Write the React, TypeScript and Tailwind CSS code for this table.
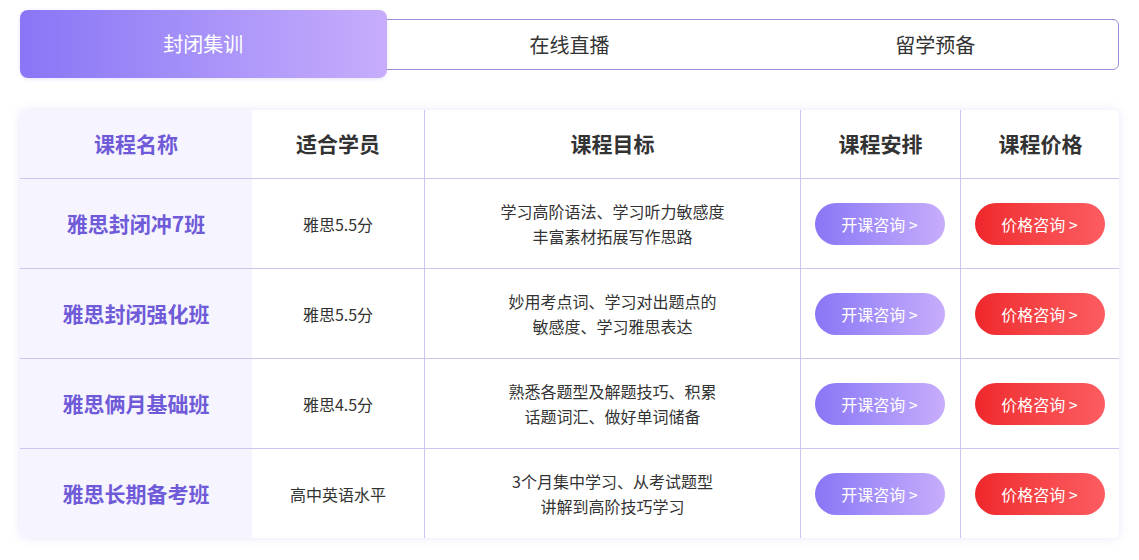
const rows = [
  { name: '雅思封闭冲7班', level: '雅思5.5分', goal: ['学习高阶语法、学习听力敏感度', '丰富素材拓展写作思路'] },
  { name: '雅思封闭强化班', level: '雅思5.5分', goal: ['妙用考点词、学习对出题点的', '敏感度、学习雅思表达'] },
  { name: '雅思俩月基础班', level: '雅思4.5分', goal: ['熟悉各题型及解题技巧、积累', '话题词汇、做好单词储备'] },
  { name: '雅思长期备考班', level: '高中英语水平', goal: ['3个月集中学习、从考试题型', '讲解到高阶技巧学习'] },
];

const font = 'font-["Microsoft_YaHei","Noto_Sans_CJK_SC",sans-serif]';

export default function App() {
  return (
    <div className={`min-h-[560px] bg-white px-[20px] pt-[19px] text-[#333] ${font}`}>
      <div className="grid h-[51px] grid-cols-3 rounded-md border border-[#a08cd4]">
        <div className="-mb-[9px] -ml-px -mt-[10px] flex items-center justify-center rounded-lg bg-gradient-to-r from-[#8a75f6] to-[#c7adfb] text-[20px] text-white shadow-[0_1px_4px_rgba(140,110,240,0.2)]">
          封闭集训
        </div>
        <div className="flex items-center justify-center text-[20px]">在线直播</div>
        <div className="flex items-center justify-center text-[20px]">留学预备</div>
      </div>

      <div className="mt-[40px] overflow-hidden rounded-md bg-white shadow-[0_0_10px_rgba(130,110,230,0.18)]">
        <div className="grid h-[68px] grid-cols-[232px_172px_376px_160px_160px] text-[21px] font-bold">
          <div className="flex items-center justify-center bg-[#f6f4fe] text-[#6f5ad8]">课程名称</div>
          <div className="flex items-center justify-center">适合学员</div>
          <div className="flex items-center justify-center border-l border-[#cdc4ef]">课程目标</div>
          <div className="flex items-center justify-center border-l border-[#cdc4ef]">课程安排</div>
          <div className="flex items-center justify-center border-l border-[#cdc4ef]">课程价格</div>
        </div>
        {rows.map((r) => (
          <div
            key={r.name}
            className="grid h-[90px] grid-cols-[232px_172px_376px_160px_160px] border-t border-[#cdc4ef] text-[16px]"
          >
            <div className="flex items-center justify-center bg-[#f6f4fe] text-[21px] font-bold text-[#6f5ad8]">
              {r.name}
            </div>
            <div className="flex items-center justify-center">{r.level}</div>
            <div className="flex flex-col items-center justify-center border-l border-[#cdc4ef] leading-[25px]">
              {r.goal.map((g) => (
                <span key={g}>{g}</span>
              ))}
            </div>
            <div className="flex items-center justify-center border-l border-[#cdc4ef] pr-[2px]">
              <button className="h-[42px] w-[130px] rounded-full bg-gradient-to-r from-[#8a75f6] to-[#c7adfb] text-[16px] text-white">
                开课咨询 &gt;
              </button>
            </div>
            <div className="flex items-center justify-center border-l border-[#cdc4ef] pr-[2px]">
              <button className="h-[42px] w-[130px] rounded-full bg-gradient-to-r from-[#ef262b] to-[#fc5c61] text-[16px] text-white">
                价格咨询 &gt;
              </button>
            </div>
          </div>
        ))}
      </div>
    </div>
  );
}
